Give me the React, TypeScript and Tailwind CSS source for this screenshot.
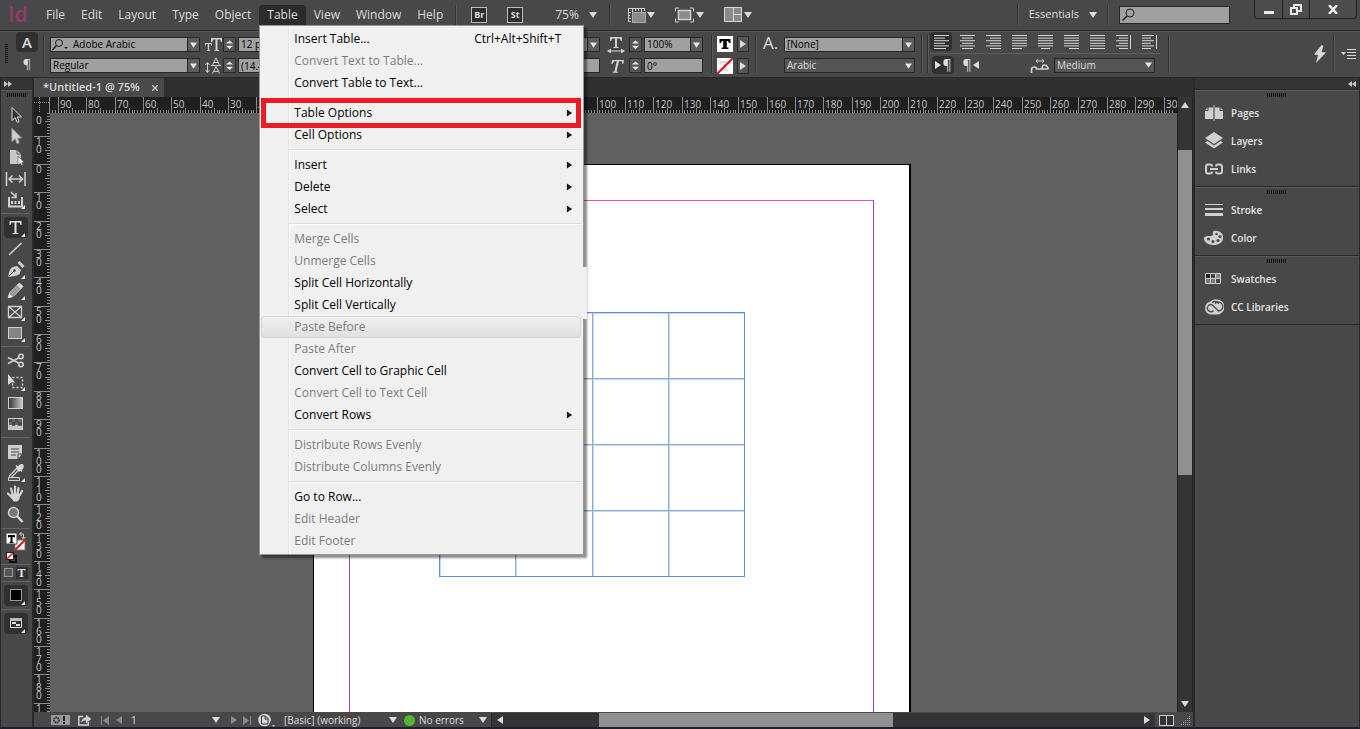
import type { ReactNode } from "react";
import clsx from "clsx";

const MM = 2.835; // one millimetre at 75% zoom

interface MenuEntry {
  label: string;
  shortcut?: string;
  submenu?: boolean;
  disabled?: boolean;
  hovered?: boolean;
  marked?: boolean;
}

const menuGroups: MenuEntry[][] = [
  [
    { label: "Insert Table...", shortcut: "Ctrl+Alt+Shift+T" },
    { label: "Convert Text to Table...", disabled: true },
    { label: "Convert Table to Text..." },
  ],
  [
    { label: "Table Options", submenu: true, marked: true },
    { label: "Cell Options", submenu: true },
  ],
  [
    { label: "Insert", submenu: true },
    { label: "Delete", submenu: true },
    { label: "Select", submenu: true },
  ],
  [
    { label: "Merge Cells", disabled: true },
    { label: "Unmerge Cells", disabled: true },
    { label: "Split Cell Horizontally" },
    { label: "Split Cell Vertically" },
    { label: "Paste Before", disabled: true, hovered: true },
    { label: "Paste After", disabled: true },
    { label: "Convert Cell to Graphic Cell" },
    { label: "Convert Cell to Text Cell", disabled: true },
    { label: "Convert Rows", submenu: true },
  ],
  [
    { label: "Distribute Rows Evenly", disabled: true },
    { label: "Distribute Columns Evenly", disabled: true },
  ],
  [
    { label: "Go to Row..." },
    { label: "Edit Header", disabled: true },
    { label: "Edit Footer", disabled: true },
  ],
];

const menus = ["File", "Edit", "Layout", "Type", "Object", "Table", "View", "Window", "Help"];

/* ---------- small shared pieces ---------- */

function Tri({ dir = "down", className = "" }: { dir?: "down" | "up" | "left" | "right"; className?: string }) {
  const d = { down: "M0 1h8L4 7z", up: "M0 7h8L4 1z", left: "M7 0v8L1 4z", right: "M1 0v8l6-4z" }[dir];
  return (
    <svg viewBox="0 0 8 8" className={clsx("w-2 h-2 shrink-0", className)} fill="currentColor" aria-hidden="true">
      <path d={d} />
    </svg>
  );
}

function Divider({ className = "" }: { className?: string }) {
  return <div className={clsx("w-0.5 shrink-0 bg-[#5a5a5a] border-l border-[#333333]", className)} />;
}

function Grip() {
  return (
    <svg width="20" height="4" aria-hidden="true">
      {Array.from({ length: 10 }, (_, i) => (
        <rect key={i} x={i * 2} width="1" height="4" fill="#111" />
      ))}
    </svg>
  );
}

function Combo({ label, value, dark, className = "" }: { label: string; value: string; dark?: boolean; className?: string }) {
  return (
    <div
      className={clsx(
        "flex h-[15px] border border-[#262626] text-[10px]",
        dark ? "bg-[#555555] text-[#dddddd]" : "bg-[#a0a0a0] text-black",
        className,
      )}
    >
      <select aria-label={label} defaultValue={value} className="min-w-0 flex-1 appearance-none pl-0.5 leading-[13px] outline-none">
        <option value={value}>{value}</option>
      </select>
      <span className={clsx("flex w-3 items-center justify-center text-[#e6e6e6]", !dark && "border-l border-[#262626] bg-[#5c5c5c]")}>
        <Tri className="w-[7px]" />
      </span>
    </div>
  );
}

function Field({ label, value, className = "" }: { label: string; value: string; className?: string }) {
  return (
    <input
      aria-label={label}
      defaultValue={value}
      className={clsx("h-[15px] min-w-0 border border-[#262626] bg-[#a0a0a0] px-0.5 text-[10px] leading-[13px] text-black outline-none", className)}
    />
  );
}

function Stepper({ label }: { label: string }) {
  return (
    <button aria-label={label} className="flex h-[15px] w-[13px] items-center justify-center border border-[#2b2b2b] bg-[#555555] text-[#e6e6e6]">
      <svg width="9" height="11" viewBox="0 0 10 11" fill="currentColor">
        <path d="M1 4.500h8L5 1zM1 7h8l-4 3.500z" />
      </svg>
    </button>
  );
}

/* ---------- menu bar ---------- */

function TableMenu() {
  return (
    <div role="menu" className="absolute left-0 top-full z-20 w-[325px] border border-[#979797] bg-[#f0f0f0] py-0.5 pr-0.5 pl-px text-[12px] text-black shadow-[3px_3px_2px_#00000070]">
      {/* repainted strip that runs past the right edge */}
      <div className="absolute -right-1 top-[241px] h-[52px] w-1.5 bg-[#f0f0f0]" />
      <div className="absolute inset-y-0 left-7 w-0.5 border-l border-[#e2e2e2] bg-white" />
      {menuGroups.map((group, gi) => (
        <div key={gi} className="relative">
          {gi > 0 && (
            <div className="ml-7 py-[3px]">
              <div className="h-0.5 border-t border-[#dcdcdc] bg-white" />
            </div>
          )}
          {group.map((item) => (
            <button
              key={item.label}
              role="menuitem"
              aria-disabled={item.disabled}
              className={clsx(
                "relative flex h-[22px] w-full items-center pl-[33px] pr-2 text-left",
                item.disabled && "text-[#7c7c7c]",
                item.hovered && "rounded-sm bg-linear-to-b from-[#f0f0f0] to-[#e0e0e0] ring-1 ring-inset ring-[#d6d6d6]",
              )}
            >
              <span className="flex-1">{item.label}</span>
              {item.shortcut && <span className="pr-3">{item.shortcut}</span>}
              {item.submenu && <Tri dir="right" className="text-[#1a1a1a] w-[7px]" />}
              {item.marked && <span className="absolute -inset-y-1 inset-x-0 border-[5px] border-[#ea1c24]" />}
            </button>
          ))}
        </div>
      ))}
    </div>
  );
}

function MenuBar() {
  return (
    <header className="flex h-[30px] shrink-0 items-start bg-[#484848] text-[12px] text-[#dcdcdc]">
      <div className="w-[38px] pl-[8px] pt-px text-[21px] leading-[26px] font-semibold text-[#98386a]">Id</div>
      <nav className="flex pt-[5px]">
        {menus.map((name) => (
          <div key={name} className="relative">
            <button className={clsx("h-5 px-2", name === "Table" && "rounded-t-sm bg-[#2b2b2b]")}>{name}</button>
            {name === "Table" && <TableMenu />}
          </div>
        ))}
      </nav>
      <div className="flex h-[29px] items-center">
        <Divider className="ml-1 h-5" />
        <button className="ml-3.5 h-4 w-4 border border-[#bdbdbd] bg-[#2e2e2e] text-[9px] leading-3 font-bold">Br</button>
        <button className="ml-5 h-4 w-4 border border-[#bdbdbd] bg-[#2e2e2e] text-[9px] leading-3 font-bold">St</button>
        <button className="ml-8 flex items-center gap-2.5">
          75% <Tri />
        </button>
        <Divider className="mx-3 h-5" />
        <button aria-label="View options" className="ml-1 flex items-center gap-px">
          <svg width="19" height="16" viewBox="0 0 19 16" fill="none" stroke="#cfcfcf">
            <path d="M1.500 1v14M1 1.500h17M5.500 1v4M8.500 1v3M11.500 1v3M14.500 1v4M17.500 1v3M1 5.500h3M1 8.500h2M1 11.500h3M1 14.500h3" />
            <rect x="5.500" y="5.500" width="13" height="10" fill="#8a8a8a" stroke="#aaa" />
          </svg>
          <Tri />
        </button>
        <button aria-label="Screen mode" className="ml-5 flex items-center gap-0.5">
          <svg width="19" height="16" viewBox="0 0 19 16" fill="none" stroke="#cfcfcf">
            <path d="M.5 4.500V1H4M15 1h3.500v3.500M18.500 11.500V15H15M4 15H.5v-3.500" />
            <rect x="3.500" y="3.500" width="12" height="9" fill="#8a8a8a" strokeWidth="1.500" />
          </svg>
          <Tri />
        </button>
        <button aria-label="Arrange documents" className="ml-5 flex items-center gap-0.5">
          <svg width="18" height="15" viewBox="0 0 18 15" fill="#8a8a8a" stroke="#d8d8d8">
            <path d="M.5.5h9v14h-9zM9.500.5h8v7h-8zM9.500 7.500h8v7h-8z" />
          </svg>
          <Tri />
        </button>
      </div>
      <div className="ml-auto flex h-[29px] items-center">
        <Divider className="h-5" />
        <button className="ml-2.5 flex items-center gap-2.5 text-[11px]">
          Essentials <Tri className="w-1.5" />
        </button>
        <Divider className="mx-2.5 h-5" />
        <label className="flex h-[18px] w-[111px] items-center border border-[#262626] bg-[#a0a0a0] pl-0.5">
          <svg width="13" height="13" viewBox="0 0 13 13" fill="none" stroke="#222" aria-hidden="true">
            <circle cx="8" cy="5" r="4" />
            <path d="M5 8l-4.500 4.500" strokeWidth="1.500" />
          </svg>
          <input aria-label="Search" className="min-w-0 flex-1 outline-none" />
        </label>
      </div>
      <div className="mr-[3px] ml-6 flex h-[19px] rounded-b-sm border border-t-0 border-[#222222] bg-[#4c4c4c]">
        <button aria-label="Minimize" className="flex w-7 items-end justify-center border-r border-[#222222] pb-1">
          <span className="h-[3px] w-2.5 bg-[#e8e8e8]" />
        </button>
        <button aria-label="Restore" className="flex w-[27px] items-center justify-center border-r border-[#222222]">
          <svg width="12" height="11" viewBox="0 0 12 11" fill="none" stroke="#e8e8e8" strokeWidth="2">
            <path d="M4 3V1h7v6H8" />
            <path d="M1 4h6v6H1z" />
          </svg>
        </button>
        <button aria-label="Close" className="flex w-[46px] items-center justify-center">
          <svg width="10" height="9" viewBox="0 0 10 9" stroke="#eee" strokeWidth="2.500">
            <path d="M1 0l8 9M9 0L1 9" />
          </svg>
        </button>
      </div>
    </header>
  );
}

/* ---------- control strip ---------- */

const alignments: { name: string; rows: [number, number][]; bar?: boolean }[] = [
  { name: "Align left", rows: [[0, 15], [0, 11], [0, 15], [0, 11], [0, 15], [0, 12]] },
  { name: "Align center", rows: [[0, 15], [2, 13], [0, 15], [2, 13], [0, 15], [2, 13]] },
  { name: "Align right", rows: [[0, 15], [4, 15], [0, 15], [4, 15], [0, 15], [4, 15]] },
  { name: "Justify, last left", rows: [[0, 15], [0, 15], [0, 15], [0, 15], [0, 15], [0, 10]] },
  { name: "Justify, last centered", rows: [[0, 15], [0, 15], [0, 15], [0, 15], [0, 15], [3, 12]] },
  { name: "Justify, last right", rows: [[0, 15], [0, 15], [0, 15], [0, 15], [0, 15], [5, 15]] },
  { name: "Justify all", rows: [[0, 15], [0, 15], [0, 15], [0, 15], [0, 15], [0, 15]] },
  { name: "Align towards spine", rows: [[0, 12], [3, 12], [0, 12], [3, 12], [0, 12], [3, 12]], bar: true },
  { name: "Align away from spine", rows: [[0, 12], [0, 9], [0, 12], [0, 9], [0, 12], [0, 9]], bar: true },
];

const Rows = ({ children, className = "" }: { children: ReactNode; className?: string }) => (
  <div className={clsx("flex flex-col gap-1.5", className)}>{children}</div>
);

function Swatch({ none }: { none?: boolean }) {
  return (
    <svg width="16" height="16" viewBox="0 0 16 16" aria-hidden="true">
      <rect width="16" height="16" fill="#fff" />
      <path d="M2.500 3h11v4H12l-1-2H9.800v6.500h1.700V13h-7v-1.500h1.700V5H5L4 7H2.500z" fill={none ? "#ddd" : "#000"} />
      {none && <path d="M0 16L16 0" stroke="#d8141c" strokeWidth="2" />}
    </svg>
  );
}

function ControlBar() {
  return (
    <div className="flex h-12 shrink-0 border-y border-[#2a2a2a] bg-[#484848] text-[#dcdcdc] shadow-[inset_0_1px_0_#5a5a5a]">
      <div className="flex w-4 items-center pl-[5px]">
        <svg width="3" height="20" aria-hidden="true">
          {Array.from({ length: 10 }, (_, i) => (
            <rect key={i} y={i * 2} width="3" height="1" fill="#111" />
          ))}
        </svg>
      </div>
      <div className="flex w-[22px] flex-col items-center gap-1 pt-px">
        <button className="h-5 w-[22px] rounded-sm bg-[#303030] text-[15px] leading-5 font-semibold">A</button>
        <button aria-label="Paragraph formatting" className="h-4 w-[22px] text-[13px] leading-4">¶</button>
      </div>
      <Divider className="mx-[5px] my-1" />
      <Rows className="w-[150px] pt-[6px]">
        <div className="flex h-[15px] border border-[#262626] bg-[#a0a0a0] text-[10px] text-black">
          <svg width="18" height="13" viewBox="0 0 18 13" fill="none" stroke="#222" className="shrink-0" aria-hidden="true">
            <circle cx="8" cy="5" r="3.500" />
            <path d="M5.500 7.500L1.500 12" strokeWidth="1.500" />
            <path d="M13 9h4l-2 2z" fill="#222" stroke="none" />
          </svg>
          <input aria-label="Font family" defaultValue="Adobe Arabic" className="min-w-0 flex-1 pl-1 leading-[13px] outline-none" />
          <button aria-label="Choose font" className="flex w-3 items-center justify-center border-l border-[#262626] bg-[#5c5c5c] text-[#e6e6e6]">
            <Tri className="w-[7px]" />
          </button>
        </div>
        <Combo label="Font style" value="Regular" />
      </Rows>
      <Rows className="ml-[5px] pt-[6px]">
        <svg width="18" height="15" viewBox="0 0 18 15" fill="#d0d0d0" aria-hidden="true">
          <path d="M6 1h11v4h-1l-1-2.500h-2.500V13H14v1H9.500v-1h1V2.500H8.500L7 5H6z" />
          <path d="M0 6h7v3H6.500L6 7H4.200v6H5v1H2v-1h.8V7H1L.5 9H0z" />
        </svg>
        <svg width="18" height="16" viewBox="0 0 18 16" fill="none" stroke="#d0d0d0" aria-hidden="true">
          <path d="M2.500 5v9M.5 7l2-2.500L4.500 7M.5 12l2 2.500 2-2.500M7.500 7l3.500-7 3.500 7M8.500 4.500h5M7.500 15.500l3.500-7 3.500 7M8.500 13.500h5M6 7.500h10" />
        </svg>
      </Rows>
      <Rows className="pt-[6px]">
        <Stepper label="Font size" />
        <Stepper label="Leading" />
      </Rows>
      <Rows className="ml-0.5 w-[362px] pt-[6px]">
        <Combo label="Font size value" value="12 pt" />
        <Field label="Leading value" value="(14.4 pt)" />
      </Rows>
      <Rows className="ml-[7px] pt-[6px]">
        <svg width="18" height="16" viewBox="0 0 18 16" fill="#d0d0d0" aria-hidden="true">
          <path d="M3 0h12v4h-1l-1.200-2.500H10V10h1.500v1h-5v-1H8V1.500H5.200L4 4H3z" />
          <path d="M0 14l4-2.500v2h10v-2l4 2.500-4 2.500v-2H4v2z" />
        </svg>
        <svg width="18" height="15" viewBox="0 0 18 15" fill="#d0d0d0" aria-hidden="true">
          <path d="M5 1h12l-.8 4h-1l-.2-2.800h-3L9.500 12.800H11l-.2 1H5.500l.2-1h1.600L9.800 2.200H7.200L5.400 5H4.300z" />
        </svg>
      </Rows>
      <Rows className="ml-1 pt-[6px]">
        <Stepper label="Horizontal scale" />
        <Stepper label="Skew" />
      </Rows>
      <Rows className="ml-0.5 w-[59px] pt-[6px]">
        <Combo label="Horizontal scale value" value="100%" />
        <Field label="Skew value" value="0°" />
      </Rows>
      <Divider className="ml-2 mr-1 my-1" />
      <Rows className="pt-[5px]">
        <div className="flex gap-1">
          <Swatch />
          <button aria-label="Fill swatches" className="flex h-4 w-3 items-center justify-center border border-[#2b2b2b] bg-[#555555]">
            <Tri dir="right" />
          </button>
        </div>
        <div className="flex gap-1">
          <Swatch none />
          <button aria-label="Stroke swatches" className="flex h-4 w-3 items-center justify-center border border-[#2b2b2b] bg-[#555555]">
            <Tri dir="right" />
          </button>
        </div>
      </Rows>
      <Divider className="mx-1.5 my-1" />
      <div className="w-[21px] pt-0.5 text-[17px] leading-5">A.</div>
      <Rows className="w-[131px] pt-[6px]">
        <Combo label="Character style" value="[None]" />
        <Combo label="Language" value="Arabic" dark />
      </Rows>
      <Divider className="ml-1.5 my-1" />
      <Divider className="ml-1 mr-px my-1" />
      <div className="flex flex-col pt-px">
        <div className="flex gap-1 border-b border-[#5e5e5e] pb-0.5">
          {alignments.map((a, i) => (
            <button
              key={a.name}
              aria-label={a.name}
              className={clsx("flex h-[19px] w-[22px] items-center justify-center", i === 0 && "rounded-sm bg-[#303030]")}
            >
              <svg width="15" height="14" viewBox="0 0 15 14" stroke="#d4d4d4" className="shrink-0">
                {a.rows.map(([x1, x2], r) => (
                  <path key={r} d={`M${x1} ${0.5 + r * 2.6}H${x2}`} />
                ))}
                {a.bar && <path d="M14.500 0v14" />}
              </svg>
            </button>
          ))}
        </div>
        <div className="flex items-center pt-0.5">
          <button aria-label="Left-to-right paragraph" className="ml-0.5 flex h-[18px] w-[22px] items-center justify-center rounded-sm bg-[#303030]">
            <Tri dir="right" className="w-1.5" />
            <span className="text-[14px] leading-4">¶</span>
          </button>
          <button aria-label="Right-to-left paragraph" className="ml-1.5 flex h-[18px] w-[22px] items-center justify-center">
            <span className="text-[14px] leading-4">¶</span>
            <Tri dir="left" className="w-1.5" />
          </button>
          <svg width="19" height="16" viewBox="0 0 19 16" fill="none" stroke="#d0d0d0" className="ml-12" aria-hidden="true">
            <path d="M1.500 16V13q0-3 3-3q2 0 2 2h4q2 0 2-2 0-2 2-2t3 2q1.500 2-.5 2h-4.500" strokeWidth="1.700" />
            <path d="M6 4h8M8 2L6 4l2 2M12 2l2 2-2 2" />
          </svg>
          <Combo label="Kashida width" value="Medium" dark className="ml-[5px] w-[101px]" />
        </div>
      </div>
      <Divider className="ml-2 my-1" />
      <div className="ml-auto flex items-center">
        <svg width="14" height="18" viewBox="0 0 14 18" fill="#d8d8d8" aria-hidden="true">
          <path d="M8.500 0L1 9.500l4 .5-2 8L13 7.500 8.500 7l2-6z" />
        </svg>
        <Divider className="mx-1.5 h-9" />
        <button aria-label="Panel menu" className="mr-1">
          <svg width="15" height="10" viewBox="0 0 15 10" fill="#d8d8d8">
            <path d="M0 3h5L2.500 6zM6 0h9v1H6zM6 3h9v1H6zM6 6h9v1H6zM6 9h9v1H6z" />
          </svg>
        </button>
      </div>
    </div>
  );
}

/* ---------- tools ---------- */

const corner = <path d="M21 20v-4l-4 4z" fill="#e6e6e6" stroke="none" />;

const toolGroups: { name: string; active?: boolean; art: ReactNode }[][] = [
  [
    { name: "Selection", art: <path d="M8 2.500v13l3.200-3 2 5 2-1-2-4.500h4.300z" fill="#333" stroke="#d8d8d8" /> },
    { name: "Direct Selection", art: <path d="M8 2.500v13l3.200-3 2 5 2-1-2-4.500h4.300z" fill="#d0d0d0" stroke="#aaa" /> },
    {
      name: "Page",
      art: (
        <>
          <path d="M6 3h7l4 4v10H6z" fill="#c8c8c8" />
          <path d="M13 3v4h4" fill="none" stroke="#555" />
          <path d="M14 9v9l2.500-2 1 2.500 1.500-.5-1-2.500h2.500z" fill="#eee" stroke="#444" strokeWidth=".6" />
        </>
      ),
    },
    { name: "Gap", art: <path d="M2.500 4v14M21 4v14M5 11h13.500M8.500 7.500L5 11l3.500 3.500M15 7.500l3.500 3.500-3.500 3.500" fill="none" stroke="#d0d0d0" strokeWidth="1.500" /> },
    {
      name: "Content Collector",
      art: (
        <>
          <path d="M5 8v9.500h13V8" fill="none" stroke="#d0d0d0" strokeWidth="2" />
          <path d="M7 12h2v3H7zM10.500 12h2v3h-2zM14 12h2v3h-2z" fill="#d0d0d0" />
          <path d="M7 3l5 5M12 4v4.500H7.500" fill="none" stroke="#d0d0d0" strokeWidth="1.500" />
          {corner}
        </>
      ),
    },
  ],
  [
    {
      name: "Type",
      active: true,
      art: (
        <>
          <path d="M5.500 4h12v4h-1l-1-2.500h-3V16h2v1h-6v-1h2V5.500h-3l-1 2.500h-1z" fill="#e0e0e0" />
          {corner}
        </>
      ),
    },
    { name: "Line", art: <path d="M5 17L17.500 5" stroke="#d4d4d4" strokeWidth="1.500" /> },
    {
      name: "Pen",
      art: (
        <>
          <path d="M4 18c1-5 2-9 5-10l4-1 4 4-1.500 4c-2 2-6 2.500-11.500 3z" fill="#d0d0d0" />
          <path d="M13.500 4l2-2 5 5-2 2z" fill="#d0d0d0" />
          <path d="M4.500 17.500L10 12" stroke="#444" />
          <circle cx="10.500" cy="11.500" r="1.300" fill="#444" />
          {corner}
        </>
      ),
    },
    {
      name: "Pencil",
      art: (
        <>
          <path d="M4 18l1.500-5.500L14 4l4 4-8.500 8.500z" fill="#9c9c9c" stroke="#bbb" strokeWidth=".6" />
          <path d="M13 5l2.500-2.500 4 4L17 9z" fill="#d8d8d8" />
          <path d="M4 18l1-4.500L8.500 17z" fill="#eee" />
          {corner}
        </>
      ),
    },
    {
      name: "Rectangle Frame",
      art: (
        <>
          <path d="M4.500 5.500h13v11h-13zM4.500 5.500l13 11M17.500 5.500l-13 11" fill="none" stroke="#cfcfcf" strokeWidth="1.300" />
          {corner}
        </>
      ),
    },
    {
      name: "Rectangle",
      art: (
        <>
          <rect x="4.500" y="5.500" width="13" height="11" fill="#858585" stroke="#cfcfcf" />
          {corner}
        </>
      ),
    },
  ],
  [
    {
      name: "Scissors",
      art: (
        <g fill="none" stroke="#d0d0d0" strokeWidth="1.600">
          <path d="M4 7.500l10.500 5.500M4 13.500L14.500 8" />
          <circle cx="17" cy="6.500" r="2.200" />
          <circle cx="17" cy="14.500" r="2.200" />
        </g>
      ),
    },
    {
      name: "Free Transform",
      art: (
        <>
          <path d="M8.500 6.500h10v10h-10z" fill="none" stroke="#cfcfcf" strokeDasharray="2 2" strokeWidth="1.500" />
          <path d="M4 3v11l3-2.500h4z" fill="#dadada" />
          {corner}
        </>
      ),
    },
    {
      name: "Gradient Swatch",
      art: (
        <>
          <defs>
            <linearGradient id="swatchFade">
              <stop offset="0" stopColor="#333" />
              <stop offset="1" stopColor="#ccc" />
            </linearGradient>
          </defs>
          <rect x="4.500" y="5.500" width="14" height="11" fill="url(#swatchFade)" stroke="#cfcfcf" />
        </>
      ),
    },
    {
      name: "Gradient Feather",
      art: (
        <>
          <rect x="4.500" y="5.500" width="14" height="11" fill="#666" stroke="#cfcfcf" />
          <path d="M5 6h3v3H5zM11 6h3v3h-3zM8 9h3v3H8zM14 9h4v3h-4z" fill="#444" />
          <path d="M5 12h3v4H5zM11 12h3v4h-3zM8 13h3v3H8zM14 13h4v3h-4z" fill="#c4c4c4" />
        </>
      ),
    },
  ],
  [
    {
      name: "Note",
      art: (
        <>
          <path d="M4 4h14v9l-4 5H4z" fill="#cecece" />
          <path d="M7 8h8M7 11h8M7 14h5M18 13h-4v5" fill="none" stroke="#444" />
        </>
      ),
    },
    {
      name: "Eyedropper",
      art: (
        <>
          <path d="M5 14.500L13 6M7 16l7.500-8" stroke="#d0d0d0" strokeWidth="1.200" />
          <path d="M12 3.500l6 6M13 6l3.500-3q2-1 2.500 1t-2 3.500L15 9z" fill="#d8d8d8" stroke="#d8d8d8" strokeWidth="1.500" />
          <path d="M4.500 15.500h11v3h-11z" fill="#555" stroke="#d0d0d0" />
          {corner}
        </>
      ),
    },
    {
      name: "Hand",
      art: (
        <g fill="none" stroke="#d4d4d4" strokeLinecap="round">
          <path d="M8.500 11L7 5.500M11 10.500V3.500M13.500 11l1-6M15.500 12.500L18 8" strokeWidth="2.200" />
          <path d="M4 10.500l3.500 3.500" strokeWidth="2.200" />
          <path d="M8 11h7.500l-.5 5-1.500 2h-3.500L7.500 15z" fill="#d4d4d4" />
        </g>
      ),
    },
    {
      name: "Zoom",
      art: (
        <>
          <circle cx="9.500" cy="8.500" r="5" fill="#777" stroke="#cfcfcf" strokeWidth="1.500" />
          <path d="M13 12l5.500 6" stroke="#d4d4d4" strokeWidth="2.500" />
        </>
      ),
    },
  ],
];

const ToolLine = () => <div className="my-[3px] h-px w-full bg-[#626262]" />;

function Toolbar() {
  return (
    <aside className="flex w-[34px] shrink-0 flex-col items-center border-r-2 border-l border-[#2a2a2a] bg-[#484848]">
      <div className="flex h-3 w-full items-center bg-[#343434] pl-[3px] text-[#c8c8c8]">
        <svg width="8" height="6" viewBox="0 0 8 6" fill="currentColor">
          <path d="M0 0v6l4-3zM4 0v6l4-3z" />
        </svg>
      </div>
      <div className="flex h-[15px] w-full justify-center border-t border-[#5a5a5a] pt-0.5">
        <Grip />
      </div>
      {toolGroups.map((group, gi) => (
        <div key={gi} className="flex w-full flex-col items-center pr-0.5">
          {gi > 0 && <ToolLine />}
          {group.map((tool) => (
            <button
              key={tool.name}
              aria-label={`${tool.name} tool`}
              className={clsx("h-[21px] w-6 shrink-0", tool.active && "rounded-sm bg-[#303030]")}
            >
              <svg width="24" height="21" viewBox="0 0 24 21">
                {tool.art}
              </svg>
            </button>
          ))}
        </div>
      ))}
      <div className="w-full pr-0.5">
        <ToolLine />
        <button aria-label="Fill and stroke" className="block">
          <svg width="28" height="32" viewBox="0 0 28 32">
            <rect x="14" y="8" width="10" height="10" fill="#fff" stroke="#777" />
            <path d="M14 18L24 8" stroke="#d8141c" strokeWidth="2" />
            <rect x="5" y="1" width="11" height="11" fill="#fff" stroke="#444" />
            <path d="M7 3h7v2.500h-1V5h-1.500v5h1v1h-4v-1h1V5H8v.5H7z" fill="#000" />
            <path d="M19 2h3.500v4M20.500 0l-2 2 2 2M20.500 5l2 2 2-2" fill="none" stroke="#ccc" />
            <rect x="9" y="24" width="6" height="6" fill="none" stroke="#111" strokeWidth="2" />
            <rect x="5.500" y="20.500" width="7" height="7" fill="#fff" stroke="#222" />
            <path d="M6 27l6-6" stroke="#d8141c" strokeWidth="1.500" />
          </svg>
        </button>
        <div className="flex h-[14px] items-center justify-center gap-[3px] border-t border-[#626262] pt-0.5">
          <button aria-label="Formatting affects container" className="h-[9px] w-[9px] border border-[#999999] bg-[#555555]" />
          <button className="h-3 w-3 bg-[#303030] font-['Liberation_Serif',serif] text-[12px] leading-3 font-bold text-[#e0e0e0]">T</button>
        </div>
        <ToolLine />
        <button aria-label="Apply color" className="mx-auto block h-[21px] w-6 rounded-sm bg-[#303030]">
          <svg width="24" height="21" viewBox="0 0 24 21">
            <rect x="6.500" y="4.500" width="11" height="11" fill="#000" stroke="#999" />
            {corner}
          </svg>
        </button>
        <ToolLine />
        <button aria-label="Screen mode" className="mx-auto block h-[21px] w-6 rounded-sm bg-[#303030]">
          <svg width="24" height="21" viewBox="0 0 24 21">
            <path d="M6.500 5.500h11v9h-11z" fill="none" stroke="#ddd" />
            <path d="M6 5h12v3H6z" fill="#bbb" />
            <path d="M8 9h4v2H8zM12 11h4v2h-4z" fill="#ddd" />
            {corner}
          </svg>
        </button>
      </div>
    </aside>
  );
}

/* ---------- document window ---------- */

function TopRuler() {
  const ticks = Array.from({ length: 397 }, (_, i) => i - 93);
  return (
    <svg className="block h-4 w-full bg-[#1f1f1f] text-[10px]" stroke="#8c8c8c" shapeRendering="crispEdges">
      {ticks.map((mm) => {
        const x = Math.round(263 + mm * MM) + 0.5;
        const major = mm % 10 === 0;
        return <path key={mm} d={`M${x} 16V${major ? 0 : mm % 5 === 0 ? 11 : 13}`} />;
      })}
      {ticks
        .filter((mm) => mm % 10 === 0)
        .map((mm) => (
          <text key={mm} x={Math.round(265 + mm * MM)} y="11" fill="#c8c8c8" stroke="none">
            {Math.abs(mm)}
          </text>
        ))}
    </svg>
  );
}

function SideRuler() {
  const ticks = Array.from({ length: 213 }, (_, i) => i - 18);
  return (
    <svg className="block h-full w-4 shrink-0 bg-[#1f1f1f] text-[10px]" stroke="#8c8c8c" shapeRendering="crispEdges">
      {ticks.map((mm) => {
        const y = Math.round(51 + mm * MM) + 0.5;
        return <path key={mm} d={`M16 ${y}H${mm % 10 === 0 ? 0 : mm % 5 === 0 ? 11 : 13}`} />;
      })}
      <text x="2" y="11" fill="#c8c8c8" stroke="none">
        0
      </text>
      {ticks
        .filter((mm) => mm % 10 === 0 && mm <= 190)
        .map((mm) =>
          String(Math.abs(mm))
            .split("")
            .slice(0, mm === 190 ? 1 : 3)
            .map((digit, i) => (
              <text key={`${mm}-${i}`} x="2" y={Math.round(60 + mm * MM) + i * 8} fill="#c8c8c8" stroke="none">
                {digit}
              </text>
            )),
        )}
    </svg>
  );
}

function Canvas() {
  return (
    <div className="relative min-w-0 flex-1 overflow-hidden bg-[#606060]">
      <div className="absolute top-[51px] left-[263px] h-[844px] w-[598px] border-2 border-t border-l border-black bg-white">
        <div className="absolute inset-x-[35px] top-[35px] bottom-[35px] border border-[#9645b4] border-t-[#cc58cc]" />
        <table className="absolute top-[147px] left-[125px] w-[306px] table-fixed border-collapse border border-[#5b90d8] outline-1 -outline-offset-1 outline-[#5b90d8]">
          <tbody>
            {[0, 1, 2, 3].map((r) => (
              <tr key={r}>
                {[0, 1, 2, 3].map((c) => (
                  <td key={c} className="h-[66px] border border-[#8fa9cc] shadow-[inset_1px_1px_0_#c4dcf6]" />
                ))}
              </tr>
            ))}
          </tbody>
        </table>
      </div>
    </div>
  );
}

function StatusBar() {
  return (
    <footer className="flex h-[15px] shrink-0 items-center bg-[#484848] pt-px text-[10px] leading-[14px] text-[#dcdcdc]">
      <svg width="20" height="12" viewBox="0 0 20 12" className="ml-[17px]" aria-hidden="true">
        <rect y="1" width="19" height="10" rx="1" fill="#9a9a9a" />
        <circle cx="5.500" cy="6" r="2.500" fill="none" stroke="#333" strokeWidth="2" strokeDasharray="1.500 .6" />
        <path d="M12 2h2v5h-2zM12 8h2v2h-2z" fill="#222" />
      </svg>
      <svg width="14" height="12" viewBox="0 0 14 12" fill="none" stroke="#d0d0d0" className="ml-[7px]" aria-hidden="true">
        <path d="M5 2.500H.8v8.500h9.500V8" strokeWidth="1.500" />
        <path d="M3.500 8Q4 4 8 3.500V1l5 4-5 4V6Q5.500 6 3.500 8z" fill="#d0d0d0" strokeWidth=".5" />
      </svg>
      <button aria-label="First page" className="ml-[9px] text-[#8a8a8a]">
        <svg width="8" height="9" viewBox="0 0 8 9" fill="currentColor">
          <path d="M0 0h1v9H0zM8 0v9L2 4.500z" />
        </svg>
      </button>
      <button aria-label="Previous page" className="ml-1.5 text-[#8a8a8a]">
        <Tri dir="left" />
      </button>
      <label className="ml-2 flex items-center">
        <select aria-label="Page" className="w-[81px] appearance-none outline-none">
          <option>1</option>
        </select>
        <Tri />
      </label>
      <button aria-label="Next page" className="ml-2.5 text-[#8a8a8a]">
        <Tri dir="right" />
      </button>
      <button aria-label="Last page" className="ml-[5px] text-[#8a8a8a]">
        <svg width="8" height="9" viewBox="0 0 8 9" fill="currentColor">
          <path d="M7 0h1v9H7zM0 0v9l6-4.500z" />
        </svg>
      </button>
      <svg width="18" height="14" viewBox="0 0 18 14" className="ml-[7px]" aria-hidden="true">
        <circle cx="6.500" cy="7" r="6.300" fill="#d8d8d8" />
        <path d="M3.500 3h4l2.500 2.500V11H3.500zM7 3v3h3" fill="none" stroke="#333" />
        <path d="M14 12h3l-1.500 2z" fill="#ddd" />
      </svg>
      <label className="ml-2 flex items-center">
        <select aria-label="Preflight profile" className="w-[105px] appearance-none outline-none">
          <option>[Basic] (working)</option>
        </select>
        <Tri />
      </label>
      <span className="ml-[7px] h-[11px] w-[11px] rounded-full bg-[#55b435]" />
      <label className="ml-1 flex items-center">
        <select aria-label="Preflight result" className="w-[60px] appearance-none outline-none">
          <option>No errors</option>
        </select>
        <Tri className="w-1.5" />
      </label>
      <div className="ml-1 flex h-full flex-1 items-center border-l border-[#2a2a2a] bg-[#343434] px-1">
        <Tri dir="left" />
        <div className="mx-1 h-full flex-1">
          <div className="ml-[14.5%] h-full w-[46.5%] bg-[#909090]" />
        </div>
        <Tri dir="right" />
      </div>
      <button aria-label="Split window" className="ml-1">
        <svg width="15" height="11" viewBox="0 0 15 11" fill="#333" stroke="#cfcfcf">
          <path d="M.5.5h7v10h-7zM7.500.5h7v10h-7z" />
        </svg>
      </button>
      <svg width="11" height="11" viewBox="0 0 11 11" fill="#999" className="ml-1.5 mr-0.5" aria-hidden="true">
        {[0, 1, 2, 3, 4].map((r) => Array.from({ length: r + 1 }, (_, c) => <rect key={`${r}${c}`} x={9 - c * 2} y={1 + r * 2} width="1" height="1" />))}
      </svg>
    </footer>
  );
}

function DocumentWindow() {
  return (
    <main className="flex min-w-0 flex-1 flex-col">
      <div className="flex h-[19px] shrink-0 bg-[#303030]">
        <div className="flex items-center gap-3 bg-[#4a4a4a] pr-1.5 pl-[9px] text-[11px] font-semibold text-[#dcdcdc]">
          *Untitled-1 @ 75%
          <button aria-label="Close document">
            <svg width="6" height="6" viewBox="0 0 6 6" stroke="#ccc" strokeWidth="1.300">
              <path d="M0 0l6 6M6 0L0 6" />
            </svg>
          </button>
        </div>
      </div>
      <div className="flex min-h-0 flex-1">
        <div className="flex min-w-0 flex-1 flex-col">
          <div className="flex h-4 shrink-0">
            <svg width="16" height="16" className="shrink-0 bg-[#1f1f1f]" stroke="#8c8c8c" aria-hidden="true">
              <path d="M5.500 0v16M0 5.500h16" strokeDasharray="1 1" />
              <path d="M15.500 0v16" />
            </svg>
            <TopRuler />
          </div>
          <div className="flex min-h-0 flex-1">
            <SideRuler />
            <Canvas />
          </div>
        </div>
        <div className="flex w-4 flex-col items-center border-x border-[#222222] bg-[#343434] py-1 text-[#d8d8d8]">
          <Tri dir="up" />
          <div className="w-full flex-1">
            <div className="h-[7%]" />
            <div className="h-[55%] w-full bg-[#909090]" />
          </div>
          <Tri />
        </div>
      </div>
      <StatusBar />
    </main>
  );
}

/* ---------- panel dock ---------- */

const panels: { name: string; art: ReactNode }[][] = [
  [
    {
      name: "Pages",
      art: <path d="M1 8h3.500V4.500H9V16H1zM11 4.500h4.500V8H19v8h-8zM9.600 2h.8v16h-.8zM1 7l2.500-2.500V7zM19 7l-2.500-2.500V7z" fill="#cfcfcf" />,
    },
    {
      name: "Layers",
      art: <path d="M10 1l9 6-9 6-9-6zM1 11.500l2.500-1.500 6.500 4.500L16.500 10l2.500 1.500-9 6z" fill="#cfcfcf" />,
    },
    {
      name: "Links",
      art: <path d="M8 7.500Q8 5.500 6 5.500H4Q2 5.500 2 8v4q0 2.500 2 2.500h2Q8 14.500 8 12.500M12 7.500Q12 5.500 14 5.500h2Q18 5.500 18 8v4q0 2.500-2 2.500h-2Q12 14.500 12 12.500M6 10h8" fill="none" stroke="#cfcfcf" strokeWidth="2" />,
    },
  ],
  [
    { name: "Stroke", art: <path d="M1 4h18v1H1zM1 8h18v2H1zM1 13h18v3H1z" fill="#cfcfcf" /> },
    {
      name: "Color",
      art: (
        <>
          <path d="M10 3C16 2 20 6 19 11c-1 4-5 6-10 6S0 14 0 10.500c0-2 3-2.500 5-2.500s5-.5 4-2C8.500 5 9 3 10 3z" fill="#cfcfcf" />
          <g fill="#484848">
            <circle cx="4.500" cy="11" r="1.600" />
            <circle cx="9" cy="13.500" r="1.600" />
            <circle cx="14" cy="12.500" r="1.600" />
            <circle cx="16" cy="8.500" r="1.500" />
            <circle cx="12.500" cy="6" r="1.200" />
          </g>
        </>
      ),
    },
  ],
  [
    {
      name: "Swatches",
      art: (
        <g stroke="#cfcfcf">
          <path d="M1.500 4.500h5v5h-5z" fill="#222" />
          <path d="M6.500 4.500h5v5h-5z" fill="#444" />
          <path d="M11.500 4.500h5v5h-5z" fill="#888" />
          <path d="M1.500 9.500h5v5h-5zM6.500 9.500h5v5h-5z" fill="#777" />
          <path d="M11.500 9.500h5v5h-5z" fill="#444" />
        </g>
      ),
    },
    {
      name: "CC Libraries",
      art: (
        <>
          <path d="M6.500 17.500A6.500 6.500 0 0 1 6 4.800Q9 1.500 13 2.500a7.500 7.500 0 0 1 0 15z" fill="#cfcfcf" />
          <g fill="none" stroke="#484848" strokeWidth="1.300">
            <path d="M9.500 13.500A3.500 3.500 0 1 1 8.500 8L14.500 14a4.500 4.500 0 1 0-3.500-7.500" />
            <path d="M8 5.500Q12 3 15 6.500" />
          </g>
        </>
      ),
    },
  ],
];

function PanelDock() {
  return (
    <aside className="w-[167px] shrink-0 border-x border-l-2 border-[#2a2a2a] bg-[#484848]">
      <div className="flex h-3 items-center justify-end border-b border-[#2a2a2a] bg-[#343434] pr-[3px] text-[#c8c8c8]">
        <svg width="8" height="6" viewBox="0 0 8 6" fill="currentColor">
          <path d="M4 0v6L0 3zM8 0v6L4 3z" />
        </svg>
      </div>
      {panels.map((group, gi) => (
        <div key={gi} className="border-b border-[#2a2a2a] pb-[3px] shadow-[inset_0_1px_0_#5a5a5a]">
          <div className="flex h-[9px] justify-center pt-[3px]">
            <Grip />
          </div>
          {group.map((panel) => (
            <button key={panel.name} className="flex h-7 w-full items-center gap-[7px] pl-[9px] text-[10px] font-semibold text-[#e4e4e4]">
              <svg width="20" height="20" viewBox="0 0 20 20" aria-hidden="true">
                {panel.art}
              </svg>
              {panel.name}
            </button>
          ))}
        </div>
      ))}
    </aside>
  );
}

export default function App() {
  return (
    <div className="flex h-screen flex-col overflow-hidden border-b-2 border-[#1e1f2a] bg-[#484848] font-['Open_Sans','Noto_Sans',sans-serif]">
      <MenuBar />
      <ControlBar />
      <div className="flex min-h-0 flex-1">
        <Toolbar />
        <DocumentWindow />
        <PanelDock />
      </div>
    </div>
  );
}
